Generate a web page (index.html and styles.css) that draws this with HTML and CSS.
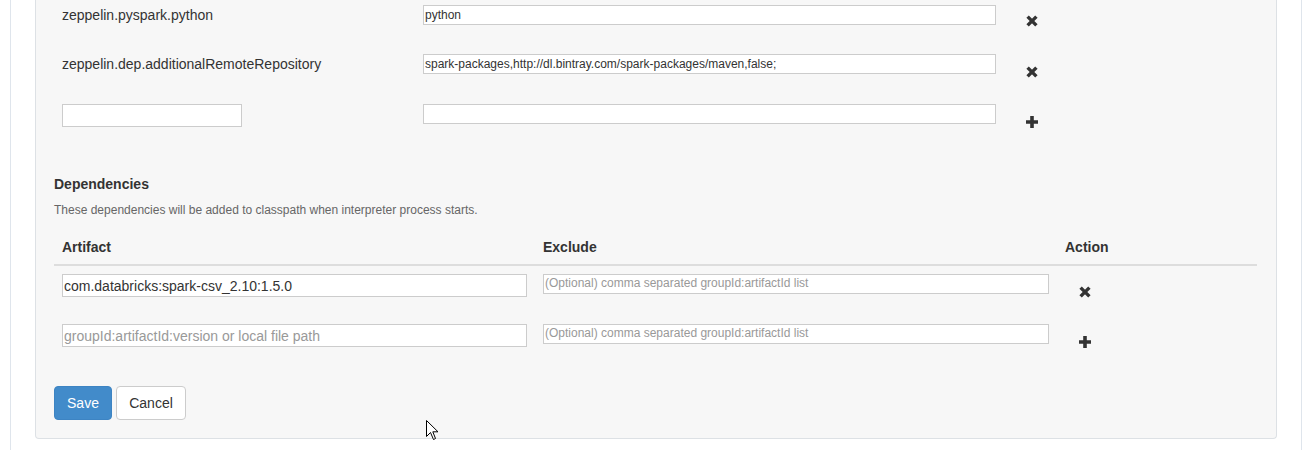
FILE: index.html
```html
<!DOCTYPE html>
<html>
<head>
<meta charset="utf-8">
<link rel="stylesheet" href="styles.css">
</head>
<body>
<div class="page">
  <div class="panel">
    <div class="props">
      <div class="prop-row">
        <div class="cell"><span class="prop-name">zeppelin.pyspark.python</span></div>
        <div class="cell"><input class="val-input" type="text" value="python"></div>
        <div class="cell icon-cell"><svg class="icon" viewBox="0 0 12 12"><path d="M1.6 1.6 L10.4 10.4 M10.4 1.6 L1.6 10.4" /></svg></div>
      </div>
      <div class="prop-row">
        <div class="cell"><span class="prop-name">zeppelin.dep.additionalRemoteRepository</span></div>
        <div class="cell"><input class="val-input" type="text" value="spark-packages,http://dl.bintray.com/spark-packages/maven,false;"></div>
        <div class="cell icon-cell"><svg class="icon" viewBox="0 0 12 12"><path d="M1.6 1.6 L10.4 10.4 M10.4 1.6 L1.6 10.4" /></svg></div>
      </div>
      <div class="prop-row">
        <div class="cell"><input class="name-input" type="text"></div>
        <div class="cell"><input class="val-input" type="text"></div>
        <div class="cell icon-cell"><svg class="icon plus" viewBox="0 0 12 12"><path d="M4.2 0h3.6v4.2h4.2v3.6h-4.2v4.2h-3.6v-4.2h-4.2v-3.6h4.2z"/></svg></div>
      </div>
    </div>

    <h4 class="dep-title">Dependencies</h4>
    <p class="dep-desc">These dependencies will be added to classpath when interpreter process starts.</p>

    <div class="dep-table">
      <div class="dep-head">
        <div class="th">Artifact</div>
        <div class="th">Exclude</div>
        <div class="th">Action</div>
      </div>
      <div class="dep-row">
        <div class="td"><input class="art-input" type="text" value="com.databricks:spark-csv_2.10:1.5.0"></div>
        <div class="td"><input class="exc-input" type="text" placeholder="(Optional) comma separated groupId:artifactId list"></div>
        <div class="td action-cell"><svg class="icon" viewBox="0 0 12 12"><path d="M1.6 1.6 L10.4 10.4 M10.4 1.6 L1.6 10.4" /></svg></div>
      </div>
      <div class="dep-row">
        <div class="td"><input class="art-input" type="text" placeholder="groupId:artifactId:version or local file path"></div>
        <div class="td"><input class="exc-input" type="text" placeholder="(Optional) comma separated groupId:artifactId list"></div>
        <div class="td action-cell"><svg class="icon plus" viewBox="0 0 12 12"><path d="M4.2 0h3.6v4.2h4.2v3.6h-4.2v4.2h-3.6v-4.2h-4.2v-3.6h4.2z"/></svg></div>
      </div>
    </div>

    <div class="buttons">
      <button class="btn btn-primary" type="button">Save</button>
      <button class="btn btn-default" type="button">Cancel</button>
    </div>
  </div>
</div>
<svg class="cursor" width="13" height="21" viewBox="0 0 13 21"><path d="M0.5 0.5 L0.5 16.5 L4.5 12.5 L7.5 19.5 L9.5 18.5 L6.8 11.8 L12 11.8 Z" fill="#fff" stroke="#000" stroke-width="1"/></svg>
</body>
</html>
```

FILE: styles.css
```css
* { box-sizing: border-box; }
html, body {
  margin: 0;
  padding: 0;
  background: #ffffff;
  font-family: "Liberation Sans", Arial, sans-serif;
  color: #333333;
  overflow: hidden;
}
body { position: relative; height: 450px; }

.page {
  margin-left: 10px;
  width: 1292px;
  height: 450px;
  border-left: 1px solid #dfe5ec;
  border-right: 1px solid #dfe5ec;
  padding: 0 24px;
}

.panel {
  background: #f7f7f7;
  border: 1px solid #dde1e5;
  border-top: none;
  border-radius: 0 0 4px 4px;
  padding: 0 18px 18px 18px;
}

.props { display: flex; flex-direction: column; }
.prop-row {
  display: grid;
  grid-template-columns: 361px 589px 1fr;
  height: 50px;
  padding-top: 4px;
  align-items: start;
}
.prop-row:first-child { height: 50px; padding-top: 5px; }
.prop-row:last-child { height: 49px; }
.cell { padding: 0 8px; }
.prop-name {
  display: block;
  font-size: 14px;
  line-height: 20px;
  color: #333;
}
.val-input {
  display: block;
  width: 573px;
  height: 20px;
  border: 1px solid #cccccc;
  background: #fff;
  font-family: "Liberation Sans", Arial, sans-serif;
  font-size: 12px;
  color: #333;
  padding: 0 1px;
  outline: none;
}
.name-input {
  display: block;
  width: 180px;
  height: 23px;
  border: 1px solid #cccccc;
  background: #fff;
  padding: 0 2px;
  outline: none;
}
.icon-cell { padding-left: 22px; padding-top: 12px; }
.prop-row:first-child .icon-cell { padding-top: 10px; }
.icon {
  display: block;
  width: 12px;
  height: 12px;
  fill: #333;
  stroke: #333;
  stroke-width: 3.4;
}
.icon.plus { stroke: none; }

.dep-title {
  margin: 25px 0 0 0;
  font-size: 14px;
  line-height: 20px;
  font-weight: bold;
  color: #333;
}
.dep-desc {
  margin: 8px 0 0 0;
  font-size: 12px;
  line-height: 17px;
  color: #666;
}

.dep-table { margin-top: 10px; width: 1203px; }
.dep-head, .dep-row {
  display: grid;
  grid-template-columns: 481px 522px 200px;
}
.dep-head { border-bottom: 2px solid #dddddd; }
.th {
  padding: 8px 8px 7px 8px;
  font-size: 14px;
  line-height: 20px;
  font-weight: bold;
  color: #333;
}
.dep-row { height: 50px; }
.td { padding: 8px; }
.art-input {
  display: block;
  width: 465px;
  height: 23px;
  border: 1px solid #cccccc;
  background: #fff;
  font-family: "Liberation Sans", Arial, sans-serif;
  font-size: 14px;
  color: #333;
  padding: 0 1px;
  outline: none;
}
.exc-input {
  display: block;
  width: 506px;
  height: 20px;
  border: 1px solid #cccccc;
  background: #fff;
  font-family: "Liberation Sans", Arial, sans-serif;
  font-size: 12px;
  color: #333;
  padding: 0 1px 3px 1px;
  outline: none;
}
.art-input::placeholder, .exc-input::placeholder { color: #999; opacity: 1; }
.action-cell { padding-left: 22px; padding-top: 20px; }

.buttons {
  margin-top: 20px;
  display: flex;
  gap: 4px;
}
.btn {
  height: 34px;
  font-family: "Liberation Sans", Arial, sans-serif;
  font-size: 14px;
  line-height: 20px;
  border-radius: 4px;
  padding: 0;
  cursor: pointer;
}
.btn-primary {
  width: 58px;
  background: #428bca;
  border: 1px solid #3d84c3;
  color: #fff;
}
.btn-default {
  width: 70px;
  background: #fff;
  border: 1px solid #cccccc;
  color: #333;
}

.cursor {
  position: absolute;
  left: 426px;
  top: 420px;
}
```
